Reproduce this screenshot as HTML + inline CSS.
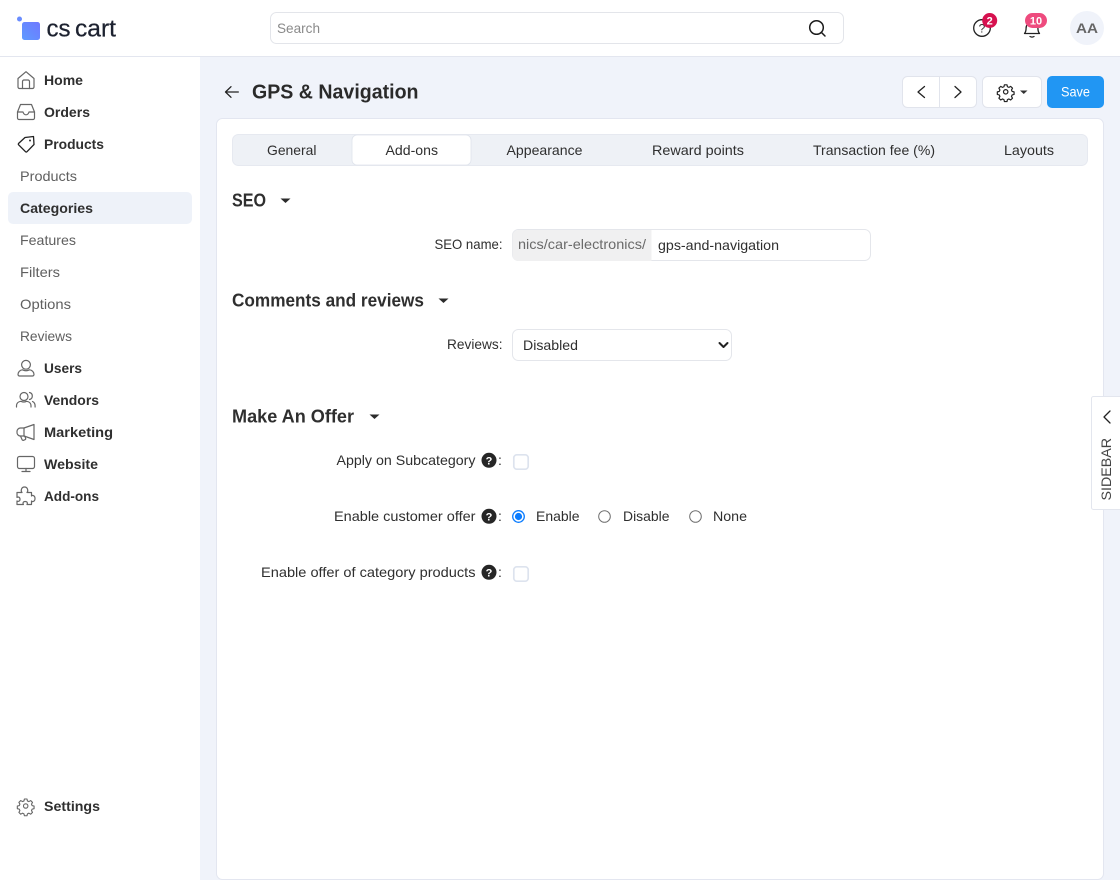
<!DOCTYPE html>
<html lang="en">
<head>
<meta charset="utf-8">
<title>GPS &amp; Navigation</title>
<style>
html,body{margin:0;padding:0;width:1120px;height:880px;overflow:hidden;background:#f0f3fa}
svg{display:block}
text{font-family:"Liberation Sans",sans-serif;fill:#2f2f2f;font-size:14px}
.b{font-weight:700}
.sub{fill:#5f5f5f}
.i{fill:none;stroke:#666;stroke-width:1.200;stroke-linecap:round;stroke-linejoin:round}
.d{fill:none;stroke:#222;stroke-width:1.300;stroke-linecap:round;stroke-linejoin:round}
</style>
</head>
<body>
<svg width="1120" height="880" viewBox="0 0 1120 880" xmlns="http://www.w3.org/2000/svg">
<defs>
<linearGradient id="g" x1="0" y1="1" x2="1" y2="0"><stop offset="0" stop-color="#5e9bff"/><stop offset="1" stop-color="#6f78ff"/></linearGradient>
<g id="gear"><circle cx="0" cy="0" r="2.400" fill="none"/><path d="M-1.400-7.600h2.800l.5 2.100 1.600.7 1.900-1.100 2 2-1.100 1.900.7 1.600 2.100.5v2.800l-2.100.5-.7 1.600 1.100 1.900-2 2-1.900-1.100-1.600.7-.5 2.100h-2.800l-.5-2.100-1.600-.7-1.900 1.100-2-2 1.100-1.900-.7-1.600-2.100-.5v-2.800l2.100-.5.7-1.600-1.100-1.900 2-2 1.900 1.100 1.600-.7z" fill="none"/></g>
<g id="q"><circle cx="0" cy="0" r="7.500" fill="#262626"/><text x="0" y="4" text-anchor="middle" class="b" style="font-size:11px;fill:#fff">?</text></g>
</defs>

<rect width="1120" height="880" fill="#f0f3fa"/>
<rect x="0" y="0" width="200" height="880" fill="#fff"/>
<rect x="0" y="0" width="1120" height="56" fill="#fff"/>
<rect x="0" y="56" width="1120" height="1" fill="#e3e6ef"/>

<!-- Logo -->
<circle cx="19.500" cy="19" r="2.500" fill="#6a8dff"/>
<rect x="22" y="22" width="18" height="18" rx="2.500" fill="url(#g)"/>
<text x="46.500" y="36.700" textLength="24" lengthAdjust="spacingAndGlyphs" style="font-size:24px;fill:#1d2230;stroke:#1d2230;stroke-width:.25">cs</text>
<text x="75" y="36.700" textLength="41" lengthAdjust="spacingAndGlyphs" style="font-size:24px;fill:#1d2230;stroke:#1d2230;stroke-width:.25">cart</text>

<!-- Search -->
<rect x="270.500" y="12.500" width="573" height="31" rx="6" fill="#fff" stroke="#e3e5ea"/>
<text x="277" y="33" textLength="43" lengthAdjust="spacingAndGlyphs" style="fill:#8a8a8a">Search</text>
<circle cx="816.500" cy="27.500" r="6.800" fill="none" stroke="#1c1c1c" stroke-width="1.500"/>
<path d="M821.500 32.500l3.500 3.500" fill="none" stroke="#1c1c1c" stroke-width="1.500" stroke-linecap="round"/>

<!-- Top icons -->
<circle cx="982" cy="28" r="8.300" class="d"/>
<text x="982" y="32.500" text-anchor="middle" style="font-size:12px;fill:#333">?</text>
<circle cx="989.700" cy="20.500" r="7.500" fill="#d6114f"/>
<text x="989.700" y="24.500" text-anchor="middle" class="b" style="font-size:11px;fill:#fff">2</text>
<path class="d" d="M1024.500 33.500c1.400-1.600 1.600-3 1.600-5.500 0-3 2.400-5.600 5.900-5.600s5.900 2.600 5.900 5.600c0 2.500.2 3.900 1.600 5.500z"/>
<path class="d" d="M1030 36.500c1.200.7 2.800.7 4 0"/>
<rect x="1025" y="13" width="22" height="15" rx="7.500" fill="#ee4b7e"/>
<text x="1036" y="24.500" text-anchor="middle" class="b" style="font-size:11px;fill:#fff">10</text>
<circle cx="1087" cy="28" r="17" fill="#f0f3fa"/>
<text x="1076" y="33" textLength="22" lengthAdjust="spacingAndGlyphs" class="b" style="font-size:13.500px;fill:#666">AA</text>

<!-- Sidebar -->
<rect x="8" y="192" width="184" height="32" rx="5" fill="#eef2f9"/>
<text class="b" x="44" y="85" textLength="39" lengthAdjust="spacingAndGlyphs">Home</text>
<text class="b" x="44" y="117" textLength="46" lengthAdjust="spacingAndGlyphs">Orders</text>
<text class="b" x="44" y="149" textLength="60" lengthAdjust="spacingAndGlyphs">Products</text>
<text class="sub" x="20" y="181" textLength="57" lengthAdjust="spacingAndGlyphs">Products</text>
<text class="b" x="20" y="213" textLength="73" lengthAdjust="spacingAndGlyphs">Categories</text>
<text class="sub" x="20" y="245" textLength="56" lengthAdjust="spacingAndGlyphs">Features</text>
<text class="sub" x="20" y="277" textLength="40" lengthAdjust="spacingAndGlyphs">Filters</text>
<text class="sub" x="20" y="309" textLength="51" lengthAdjust="spacingAndGlyphs">Options</text>
<text class="sub" x="20" y="341" textLength="52" lengthAdjust="spacingAndGlyphs">Reviews</text>
<text class="b" x="44" y="373" textLength="38" lengthAdjust="spacingAndGlyphs">Users</text>
<text class="b" x="44" y="405" textLength="55" lengthAdjust="spacingAndGlyphs">Vendors</text>
<text class="b" x="44" y="437" textLength="69" lengthAdjust="spacingAndGlyphs">Marketing</text>
<text class="b" x="44" y="469" textLength="54" lengthAdjust="spacingAndGlyphs">Website</text>
<text class="b" x="44" y="501" textLength="55" lengthAdjust="spacingAndGlyphs">Add-ons</text>
<text class="b" x="44" y="811" textLength="56" lengthAdjust="spacingAndGlyphs">Settings</text>

<!-- Sidebar icons -->
<path class="i" d="M18 78.500l8-6.800 8 6.800v8.500a1.500 1.500 0 0 1-1.500 1.500h-13a1.500 1.500 0 0 1-1.500-1.500z"/>
<path class="i" d="M22.500 88.500v-7a1.500 1.500 0 0 1 1.500-1.500h4a1.500 1.500 0 0 1 1.500 1.500v7"/>
<path class="i" d="M17.500 112l3-7.500h11l3 7.500v6a1.500 1.500 0 0 1-1.500 1.500h-14a1.500 1.500 0 0 1-1.500-1.500z"/>
<path class="i" d="M17.500 112h5.500c.6 2 1.400 2.800 3 2.800s2.400-.8 3-2.800h5.500"/>
<path class="d" d="M18.500 143.500l6.500-6 8.500-1 .5 8-7 7.200a1 1 0 0 1-1.500 0l-7-7a1 1 0 0 1 0-1.200z"/>
<circle cx="30" cy="140.500" r="1" fill="#333"/>
<circle cx="26" cy="364.800" r="4.400" class="i"/>
<path class="i" d="M18 374.500c0-2.600 2-4.400 4.500-4.700 2.200 1.200 4.800 1.200 7 0 2.500.3 4.500 2.100 4.500 4.700a1.500 1.500 0 0 1-1.500 1.500h-13a1.500 1.500 0 0 1-1.500-1.500z"/>
<circle cx="24" cy="396.500" r="4" class="i"/>
<path class="i" d="M16.500 407v-1c0-2.800 2-4.500 4.500-4.700 1.800.9 3.700.9 5.500 0 2.500.2 4.500 1.900 4.500 4.700v1"/>
<path class="i" d="M29.500 392.500c2 .4 2.800 2 2.800 3.500s-.8 3.100-2.800 3.500M32.500 401.500c1.700.7 2.600 2.400 2.600 4.500v1"/>
<path class="i" d="M34 424.500v15l-10-3.500h-3.500a3.500 3.500 0 0 1-3.500-4v-.5a3.500 3.500 0 0 1 3.500-3.500h3.500z"/>
<path class="i" d="M24 428v8M20.500 436l1.500 3.500a1.200 1.200 0 0 0 1.500.8l1.500-.6a1.200 1.200 0 0 0 .6-1.500l-.8-2"/>
<rect x="17.500" y="456.500" width="17" height="12" rx="2" class="i"/>
<path class="i" d="M26 468.500v3M22 471.500h8"/>
<path class="i" d="M17 492.500h5c-1.200-1-1.200-5.500 2.500-5.500s3.700 4.500 2.500 5.500h4.500v3.500c.8-1 3.500-.8 3.500 2.500s-2.700 3.500-3.500 2.500v3.500h-4.500c.8-1.200.4-3-1.800-3s-2.600 1.800-1.800 3h-6.400v-3.500c1 .8 3 .4 3-1.800s-2-2.600-3-1.800z"/>
<g class="i" transform="translate(25.700 806) scale(.92)"><use href="#gear"/></g>

<!-- Page header -->
<path class="d" d="M238.300 92h-12.800M231 86.700l-5.500 5.300 5.500 5.300"/>
<text class="b" x="252" y="98.500" textLength="166.500" lengthAdjust="spacingAndGlyphs" style="font-size:20px;fill:#2a2a2a">GPS &amp; Navigation</text>

<rect x="902.500" y="76.500" width="74" height="31" rx="5" fill="#fff" stroke="#e1e4ec"/>
<rect x="939" y="77" width="1" height="30" fill="#e1e4ec"/>
<path class="d" d="M924.500 86.500l-6.500 5.500 6.500 5.500M955 86.500l6 5.500-6 5.500"/>
<rect x="982.500" y="76.500" width="59" height="31" rx="5" fill="#fff" stroke="#e1e4ec"/>
<g class="d" transform="translate(1005.700 91.800) scale(.92)"><use href="#gear"/></g>
<path d="M1020 90.500h7.500l-3.750 3.500z" fill="#333"/>
<rect x="1047" y="76" width="57" height="32" rx="5" fill="#2196f3"/>
<text x="1061" y="96.500" textLength="29" lengthAdjust="spacingAndGlyphs" style="fill:#fff">Save</text>

<!-- Card -->
<rect x="216.500" y="118.500" width="887" height="761" rx="6" fill="#fff" stroke="#e3e6f0"/>

<!-- Tabs -->
<rect x="232.500" y="134.500" width="855" height="31" rx="6" fill="#eef1f6" stroke="#e6e9f0"/>
<rect x="352" y="135" width="119" height="30" rx="5" fill="#fff" stroke="#dfe3ec" stroke-width=".8"/>
<text x="267" y="155" textLength="49.500" lengthAdjust="spacingAndGlyphs">General</text>
<text x="385.500" y="155" textLength="52.500" lengthAdjust="spacingAndGlyphs">Add-ons</text>
<text x="506.500" y="155" textLength="76" lengthAdjust="spacingAndGlyphs">Appearance</text>
<text x="652" y="155" textLength="92" lengthAdjust="spacingAndGlyphs">Reward points</text>
<text x="813" y="155" textLength="122" lengthAdjust="spacingAndGlyphs">Transaction fee (%)</text>
<text x="1004" y="155" textLength="50" lengthAdjust="spacingAndGlyphs">Layouts</text>

<!-- SEO -->
<text class="b" x="232" y="206.500" textLength="34" lengthAdjust="spacingAndGlyphs" style="font-size:18px">SEO</text>
<path d="M280.500 198.500h10l-5 4.500z" fill="#2b2b2b"/>
<text x="434.500" y="249" textLength="68" lengthAdjust="spacingAndGlyphs">SEO name:</text>
<rect x="512.500" y="229.500" width="358" height="31" rx="6" fill="#fff" stroke="#e4e6eb"/>
<path d="M651.500 230h-133a6 6 0 0 0-6 6v19a6 6 0 0 0 6 6h133z" fill="#f0f0f1"/>
<text x="518" y="249" textLength="128" lengthAdjust="spacingAndGlyphs" style="fill:#6a6a6a">nics/car-electronics/</text>
<text x="658" y="250" textLength="121" lengthAdjust="spacingAndGlyphs">gps-and-navigation</text>

<!-- Comments -->
<text class="b" x="232" y="306.500" textLength="192" lengthAdjust="spacingAndGlyphs" style="font-size:18px">Comments and reviews</text>
<path d="M438.500 298.500h10l-5 4.500z" fill="#2b2b2b"/>
<text x="447" y="349" textLength="55.500" lengthAdjust="spacingAndGlyphs">Reviews:</text>
<rect x="512.500" y="329.500" width="219" height="31" rx="6" fill="#fff" stroke="#e4e6eb"/>
<text x="523" y="350" textLength="55" lengthAdjust="spacingAndGlyphs">Disabled</text>
<path d="M719.500 343l4 4 4-4" fill="none" stroke="#222" stroke-width="2" stroke-linecap="round" stroke-linejoin="round"/>

<!-- Make An Offer -->
<text class="b" x="232" y="422.500" textLength="122" lengthAdjust="spacingAndGlyphs" style="font-size:18px">Make An Offer</text>
<path d="M369.500 414.500h10l-5 4.500z" fill="#2b2b2b"/>

<text x="336.500" y="465" textLength="139" lengthAdjust="spacingAndGlyphs">Apply on Subcategory</text>
<use href="#q" x="489" y="460.300"/>
<text x="498" y="465">:</text>
<rect x="513.800" y="454.800" width="14.400" height="14.400" rx="3" fill="#fff" stroke="#dde3ee" stroke-width="1.700"/>

<text x="334" y="521" textLength="141.500" lengthAdjust="spacingAndGlyphs">Enable customer offer</text>
<use href="#q" x="489" y="516.300"/>
<text x="498" y="521">:</text>
<circle cx="518.500" cy="516.500" r="5.800" fill="#fff" stroke="#0a7cff" stroke-width="1.300"/>
<circle cx="518.500" cy="516.500" r="3.600" fill="#0a7cff"/>
<text x="536" y="521" textLength="43.500" lengthAdjust="spacingAndGlyphs">Enable</text>
<circle cx="604.500" cy="516.500" r="5.800" fill="#fff" stroke="#6f6f6f" stroke-width="1"/>
<text x="623" y="521" textLength="46.500" lengthAdjust="spacingAndGlyphs">Disable</text>
<circle cx="695.500" cy="516.500" r="5.800" fill="#fff" stroke="#6f6f6f" stroke-width="1"/>
<text x="713" y="521" textLength="34" lengthAdjust="spacingAndGlyphs">None</text>

<text x="261" y="577" textLength="214.500" lengthAdjust="spacingAndGlyphs">Enable offer of category products</text>
<use href="#q" x="489" y="572.300"/>
<text x="498" y="577">:</text>
<rect x="513.800" y="566.800" width="14.400" height="14.400" rx="3" fill="#fff" stroke="#dde3ee" stroke-width="1.700"/>

<!-- Sidebar tab -->
<path d="M1121 396.500h-27.500a2 2 0 0 0-2 2v109a2 2 0 0 0 2 2h27.500z" fill="#fff" stroke="#e3e6ee"/>
<path class="d" d="M1110 411l-6 6 6 6"/>
<text transform="translate(1111 500.500) rotate(-90)" textLength="62.500" lengthAdjust="spacingAndGlyphs" style="fill:#444">SIDEBAR</text>
</svg>
</body>
</html>
